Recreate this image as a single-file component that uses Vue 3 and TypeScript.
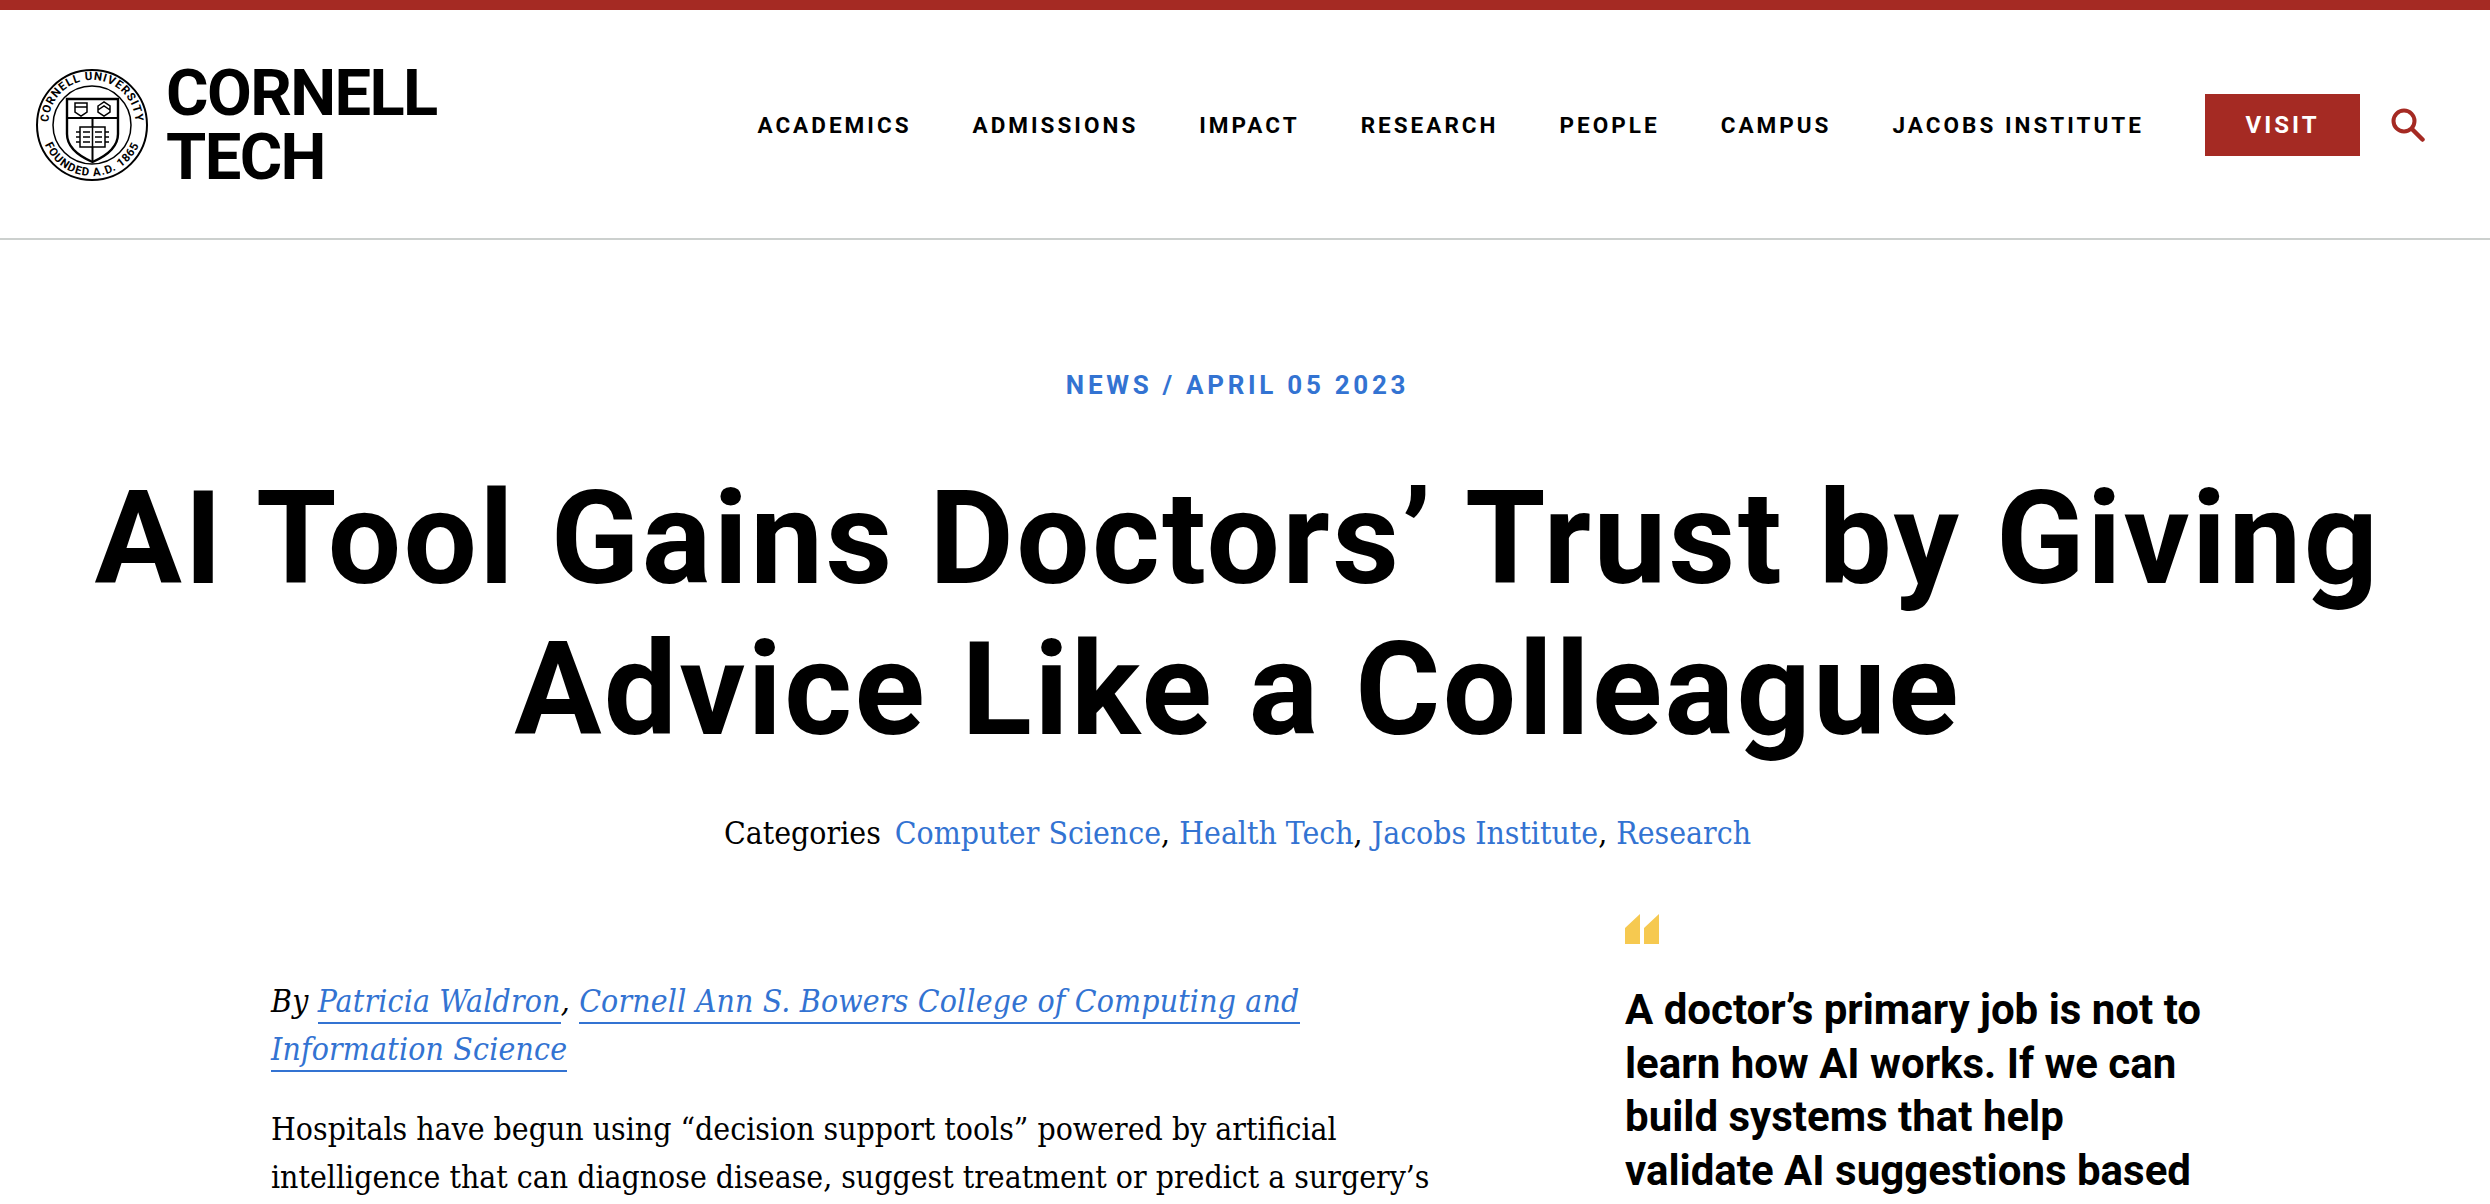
<script setup lang="ts">
const navItems: string[] = ['ACADEMICS', 'ADMISSIONS', 'IMPACT', 'RESEARCH', 'PEOPLE', 'CAMPUS', 'JACOBS INSTITUTE']
const categories: string[] = ['Computer Science', 'Health Tech', 'Jacobs Institute', 'Research']
</script>

<template>
  <div class="page">
    <header class="header">
      <a class="brand">
        <svg class="seal" viewBox="0 0 112 112" width="112" height="112">
          <defs>
            <path id="seal-top" d="M 13 61 A 43.500 43.500 0 1 1 99 61" />
            <path id="seal-bottom" d="M 5 56 A 51 51 0 0 0 107 56" />
          </defs>
          <circle cx="56" cy="56" r="55" fill="none" stroke="#000" stroke-width="2" />
          <circle cx="56" cy="56" r="39" fill="none" stroke="#000" stroke-width="1.500" />
          <text class="seal-text"><textPath href="#seal-top" startOffset="50%" text-anchor="middle">CORNELL UNIVERSITY</textPath></text>
          <text class="seal-text"><textPath href="#seal-bottom" startOffset="50%" text-anchor="middle">FOUNDED A.D. 1865</textPath></text>
          <path d="M31 30 H82 V65 C82 79 68 88 56.500 93 C45 88 31 79 31 65 Z" fill="#fff" stroke="#000" stroke-width="2.400" />
          <path d="M31 49 H82 M56.500 49 V58 M56.500 78 V93" fill="none" stroke="#000" stroke-width="2" />
          <path d="M39 34 H51 V43 L45 47 L39 43 Z M39 38 H51 M62 37 L68 33 L74 37 V43 L68 47 L62 43 Z M62 41 L68 37 L74 41" fill="none" stroke="#000" stroke-width="1.500" />
          <path d="M44 58 H69 V78 H44 Z M56.500 58 V78 M47 63 H54 M47 68 H54 M47 73 H54 M59 63 H66 M59 68 H66 M59 73 H66 M40 63 H44 M40 68 H44 M40 73 H44 M69 63 H73 M69 68 H73 M69 73 H73" fill="none" stroke="#000" stroke-width="1.500" />
        </svg>
        <span class="wordmark">CORNELL<br />TECH</span>
      </a>
      <nav class="nav">
        <a v-for="item in navItems" :key="item" class="nav-link">{{ item }}</a>
      </nav>
      <a class="visit">VISIT</a>
      <svg class="search" viewBox="0 0 34 34" width="34" height="34">
        <circle cx="13" cy="13" r="10.500" fill="none" stroke="#a52a23" stroke-width="4" />
        <path d="M21 21 L31.500 31.500" stroke="#a52a23" stroke-width="4.500" stroke-linecap="round" />
      </svg>
    </header>

    <main class="main">
      <p class="eyebrow">NEWS / APRIL 05 2023</p>
      <h1 class="title">AI Tool Gains Doctors’ Trust by Giving<br />Advice Like a Colleague</h1>
      <p class="categories">
        <span class="cat-label">Categories</span>
        <template v-for="(cat, i) in categories" :key="cat"><a class="blue">{{ cat }}</a><span v-if="i < categories.length - 1">, </span></template>
      </p>
      <div class="columns">
        <article class="article">
          <p class="byline">By <a class="author">Patricia Waldron</a>, <a class="author">Cornell Ann S. Bowers College of Computing and</a><br /><a class="author">Information Science</a></p>
          <p class="body">Hospitals have begun using “decision support tools” powered by artificial intelligence that can diagnose disease, suggest treatment or predict a surgery’s</p>
        </article>
        <aside class="aside">
          <svg class="quote-mark" viewBox="0 0 34 30" width="34" height="30">
            <path d="M0 30 V14 L15 0 V30 Z M19 30 V14 L34 0 V30 Z" fill="#f6c950" />
          </svg>
          <blockquote class="quote">A doctor’s primary job is not to learn how AI works. If we can build systems that help validate AI suggestions based</blockquote>
        </aside>
      </div>
    </main>
  </div>
</template>

<style>
html, body { margin: 0; background: #fff; overflow: hidden; }
</style>

<style scoped>
.page {
  height: 1204px;
  overflow: hidden;
  background: #fff;
  color: #000;
  font-family: "Roboto", "Liberation Sans", sans-serif;
}
.header {
  box-sizing: border-box;
  height: 240px;
  border-top: 10px solid #a52a23;
  border-bottom: 2px solid #ccd0ce;
  display: flex;
  align-items: center;
  padding: 2px 65px 0 36px;
}
.brand { display: flex; align-items: center; gap: 18px; }
.seal { display: block; }
.seal-text { font-size: 11.500px; font-weight: 700; letter-spacing: 0.900px; fill: #000; }
.wordmark { font-size: 65px; line-height: 64px; font-weight: 700; letter-spacing: -1.600px; }
.nav { margin-left: auto; display: flex; gap: 61px; }
.nav-link { font-size: 22.500px; font-weight: 700; letter-spacing: 3.020px; line-height: 30px; white-space: nowrap; }
.visit {
  margin-left: 61px;
  width: 155px;
  height: 62px;
  display: flex;
  align-items: center;
  justify-content: center;
  background: #a52a23;
  color: #fff;
  font-size: 24px;
  font-weight: 700;
  letter-spacing: 3px;
}
.search { margin-left: 31px; }
.main { display: flex; flex-direction: column; align-items: center; padding-right: 15px; }
.eyebrow {
  margin: 128px 0 0;
  font-size: 26px;
  line-height: 34px;
  font-weight: 700;
  letter-spacing: 3.700px;
  color: #3373d2;
}
.title {
  margin: 61px 0 0;
  font-size: 130px;
  line-height: 151px;
  font-weight: 700;
  letter-spacing: 2.350px;
  text-align: center;
  white-space: nowrap;
}
.categories {
  margin: 44px 0 0;
  font-family: "DejaVu Serif Condensed", "DejaVu Serif", serif;
  font-size: 31.700px;
  line-height: 48px;
}
.cat-label { margin-right: 14px; }
.blue { color: #3373d2; }
.columns { align-self: stretch; display: flex; padding-left: 271px; }
.article { width: 1180px; padding-top: 120px; font-family: "DejaVu Serif Condensed", "DejaVu Serif", serif; }
.byline { margin: 0; font-size: 31.700px; line-height: 48px; font-style: italic; letter-spacing: 0.180px; }
.author { color: #3373d2; border-bottom: 2px solid #3373d2; padding-bottom: 3px; }
.body { margin: 32px 0 0; font-size: 31.700px; line-height: 48px; }
.aside { margin-left: 174px; width: 590px; padding-top: 57px; }
.quote-mark { display: block; }
.quote { margin: 39px 0 0; font-size: 42px; line-height: 53.500px; font-weight: 700; }
</style>
